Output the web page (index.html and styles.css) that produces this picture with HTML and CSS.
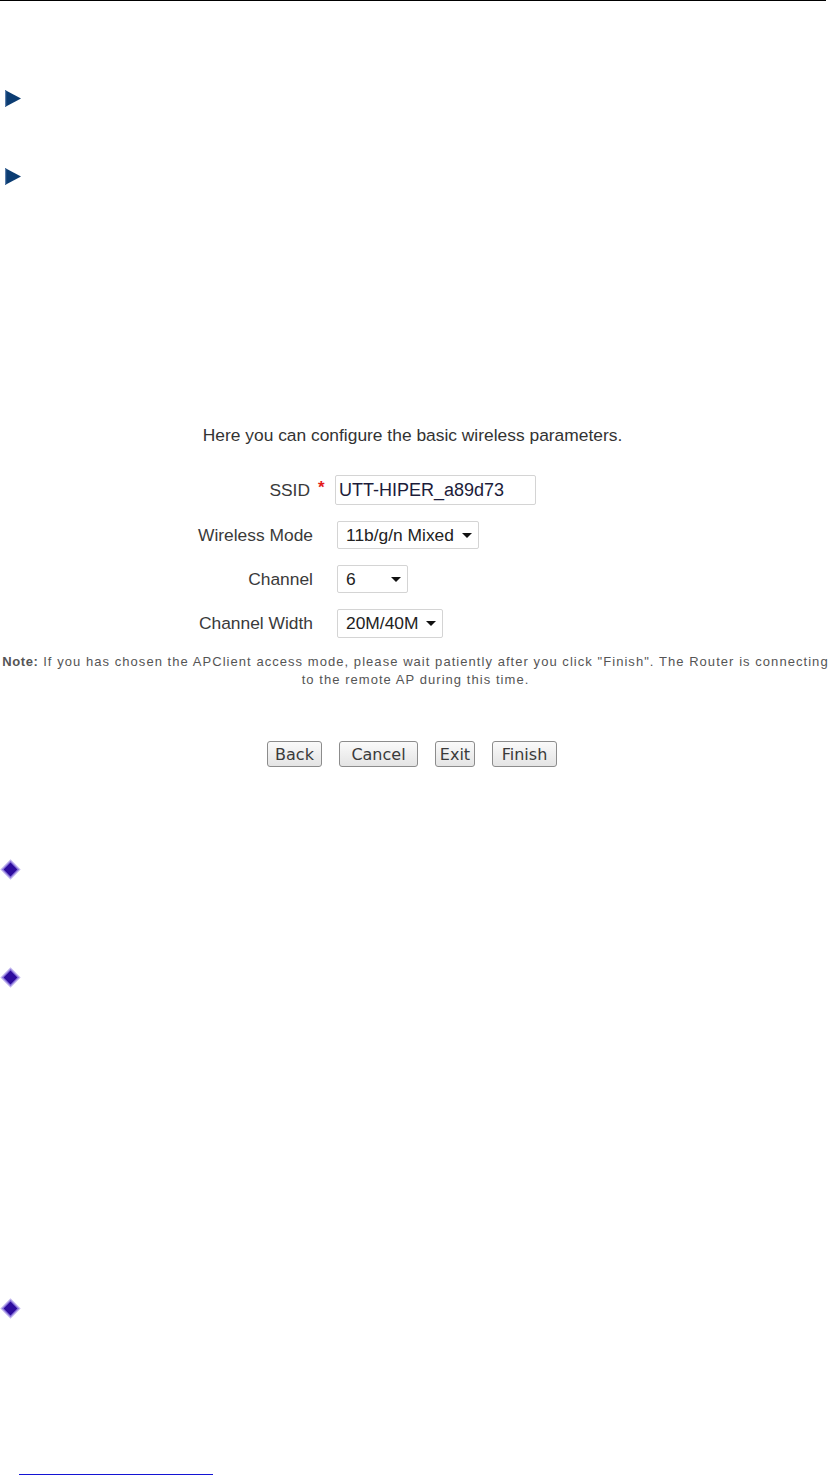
FILE: index.html
```html
<!DOCTYPE html>
<html lang="en">
<head>
    <meta charset="UTF-8">
    <title>Wireless Wizard</title>
    <link rel="stylesheet" href="styles.css">
</head>
<body>
    <div class="page">
        <div class="top-rule"></div>

        <div class="bullet bullet-first">
            <svg class="arrow" width="16" height="17" viewBox="0 0 16 17">
                <polygon points="0,0 16,8.5 0,17" fill="#0b3c72"/>
                <rect x="0" y="0.5" width="1.2" height="16" fill="#5d7fab"/>
            </svg>
        </div>
        <div class="bullet bullet-second">
            <svg class="arrow" width="16" height="17" viewBox="0 0 16 17">
                <polygon points="0,0 16,8.5 0,17" fill="#0b3c72"/>
                <rect x="0" y="0.5" width="1.2" height="16" fill="#5d7fab"/>
            </svg>
        </div>

        <div class="wizard">
            <p class="intro">Here you can configure the basic wireless parameters.</p>

            <div class="form-grid">
                <label class="label">SSID</label>
                <span class="required">*</span>
                <input class="text-input" type="text" value="UTT-HIPER_a89d73">

                <label class="label">Wireless Mode</label>
                <span></span>
                <div class="select select-mode">
                    <span class="select-value">11b/g/n Mixed</span>
                    <span class="caret"></span>
                </div>

                <label class="label">Channel</label>
                <span></span>
                <div class="select select-channel">
                    <span class="select-value">6</span>
                    <span class="caret"></span>
                </div>

                <label class="label">Channel Width</label>
                <span></span>
                <div class="select select-width">
                    <span class="select-value">20M/40M</span>
                    <span class="caret"></span>
                </div>
            </div>

            <p class="note"><b>Note:</b> If you has chosen the APClient access mode, please wait patiently after you click "Finish". The Router is connecting<br>to the remote AP during this time.</p>

            <div class="buttons">
                <button class="btn btn-back">Back</button>
                <button class="btn btn-cancel">Cancel</button>
                <button class="btn btn-exit">Exit</button>
                <button class="btn btn-finish">Finish</button>
            </div>
        </div>

        <div class="bullet diamond-first">
            <svg class="diamond" width="21" height="21" viewBox="0 0 21 21">
                <polygon points="10.5,0.3 20.7,10.5 10.5,20.7 0.3,10.5" fill="#c4b8ee"/>
                <polygon points="10.5,1.8 19.2,10.5 10.5,19.2 1.8,10.5" fill="#8b76da"/>
                <polygon points="10.5,3.6 17.4,10.5 10.5,17.4 3.6,10.5" fill="#2d0b9e"/>
            </svg>
        </div>
        <div class="bullet diamond-second">
            <svg class="diamond" width="21" height="21" viewBox="0 0 21 21">
                <polygon points="10.5,0.3 20.7,10.5 10.5,20.7 0.3,10.5" fill="#c4b8ee"/>
                <polygon points="10.5,1.8 19.2,10.5 10.5,19.2 1.8,10.5" fill="#8b76da"/>
                <polygon points="10.5,3.6 17.4,10.5 10.5,17.4 3.6,10.5" fill="#2d0b9e"/>
            </svg>
        </div>
        <div class="bullet diamond-third">
            <svg class="diamond" width="21" height="21" viewBox="0 0 21 21">
                <polygon points="10.5,0.3 20.7,10.5 10.5,20.7 0.3,10.5" fill="#c4b8ee"/>
                <polygon points="10.5,1.8 19.2,10.5 10.5,19.2 1.8,10.5" fill="#8b76da"/>
                <polygon points="10.5,3.6 17.4,10.5 10.5,17.4 3.6,10.5" fill="#2d0b9e"/>
            </svg>
        </div>

        <div class="footnote-rule"></div>
    </div>
</body>
</html>
```

FILE: styles.css
```css
body {
    margin: 0;
    background-color: white;
    font-family: "Liberation Sans", Arial, sans-serif;
    color: #333;
}

.page {
    width: 831px;
    display: flex;
    flex-direction: column;
}

.top-rule {
    width: 826px;
    border-top: 1px solid #000;
}

.bullet {
    display: flex;
    line-height: 0;
}

.bullet svg {
    display: block;
}

.bullet-first {
    margin-top: 89px;
    padding-left: 5px;
}

.bullet-second {
    margin-top: 61px;
    padding-left: 5px;
}

/* wizard screenshot */
.wizard {
    margin-top: 240px;
}

.intro {
    margin: 0;
    text-align: center;
    font-size: 17.4px;
    line-height: 20px;
    color: #333;
    padding-right: 6px;
}

.form-grid {
    display: grid;
    grid-template-columns: 313px 22px auto;
    align-items: center;
    row-gap: 16px;
    margin-top: 30px;
}

.label {
    text-align: right;
    font-size: 17.4px;
    color: #3a3a3a;
}

.form-grid .label:first-child {
    padding-right: 3px;
}

.required {
    color: #e31b1b;
    font-size: 17px;
    font-weight: bold;
    padding-left: 5px;
    align-self: start;
    padding-top: 3px;
}

.text-input {
    width: 201px;
    height: 30px;
    box-sizing: border-box;
    border: 1px solid #d4d4d4;
    border-radius: 2px;
    padding: 0 3px;
    font-family: "Liberation Sans", Arial, sans-serif;
    font-size: 18px;
    color: #1c1c3a;
    justify-self: start;
}

.select {
    display: flex;
    align-items: center;
    justify-content: space-between;
    box-sizing: border-box;
    height: 28px;
    margin-left: 2px;
    padding: 0 6px 0 8px;
    border: 1px solid #d4d4d4;
    border-radius: 2px;
    background-color: white;
    font-size: 17.4px;
    color: #222;
    justify-self: start;
}

.select-mode {
    width: 142px;
}

.select-channel {
    width: 71px;
}

.select-width {
    width: 106px;
    height: 29px;
}

.caret {
    width: 0;
    height: 0;
    border-left: 5px solid transparent;
    border-right: 5px solid transparent;
    border-top: 5px solid #111;
}

.note {
    margin: 15px 0 0;
    text-align: center;
    font-size: 13px;
    line-height: 18px;
    letter-spacing: 1.05px;
    color: #555;
    white-space: nowrap;
}

.note b {
    color: #555;
    letter-spacing: 0.6px;
}

.buttons {
    display: flex;
    justify-content: center;
    gap: 17px;
    margin-top: 52px;
    padding-right: 7px;
}

.btn {
    height: 26px;
    padding: 0;
    border: 1px solid #8c8c8c;
    border-radius: 3px;
    background: linear-gradient(to bottom, #fafafa, #e4e4e4);
    font-family: "DejaVu Sans", Verdana, sans-serif;
    font-size: 16px;
    color: #3a3a3a;
}

.btn-back {
    width: 55px;
}

.btn-cancel {
    width: 79px;
}

.btn-exit {
    width: 40px;
}

.btn-finish {
    width: 65px;
}

.diamond-first {
    margin-top: 92px;
}

.diamond-second {
    margin-top: 87px;
}

.diamond-third {
    margin-top: 310px;
}

.footnote-rule {
    margin-top: 155px;
    margin-left: 19px;
    width: 194px;
    border-top: 1px solid #1414d4;
}
```
